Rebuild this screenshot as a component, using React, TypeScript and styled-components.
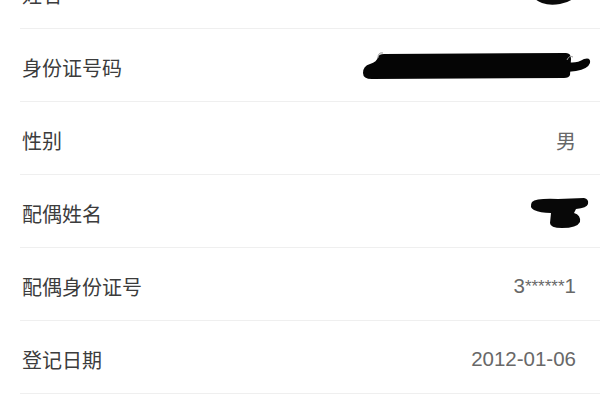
import * as React from 'react';
import styled, { createGlobalStyle } from 'styled-components';

const GlobalStyle = createGlobalStyle`
  html, body {
    margin: 0;
    padding: 0;
    background: #ffffff;
    overflow: hidden;
  }
`;

const Page = styled.div`
  width: 600px;
  height: 400px;
  overflow: hidden;
  background: #ffffff;
  font-family: "Noto Sans CJK SC", "Noto Sans", sans-serif;
`;

const List = styled.div`
  margin-top: -44px;
  padding-left: 20px;
`;

const Row = styled.div`
  display: flex;
  align-items: center;
  justify-content: space-between;
  box-sizing: border-box;
  height: 73px;
  padding: 4px 24px 0 2px;
  border-bottom: 1px solid #efefef;
`;

const Label = styled.span`
  font-size: 20px;
  color: #3c3c3c;
`;

const Value = styled.span<{ $latin?: boolean }>`
  display: flex;
  align-items: center;
  font-family: ${p => (p.$latin ? '"Liberation Sans", Arial, sans-serif' : '"Noto Sans CJK SC", sans-serif')};
  font-size: ${p => (p.$latin ? '20.5px' : '20px')};
  color: #686868;
`;

const Scribble = styled.svg<{ $shift?: number }>`
  display: block;
  margin-right: ${p => -(p.$shift ?? 0)}px;
`;

const NameBlot = () => (
  <Scribble width="48" height="28" viewBox="0 0 48 28" $shift={2}>
    <path d="M4,14 Q14,12 26,13 Q38,11 44,8 Q48,10 46,15 Q42,22 30,24 Q20,26 12,23 Q2,19 4,14 Z" fill="#0a0a0a" />
  </Scribble>
);

const IdBlot = () => (
  <Scribble width="230" height="30" viewBox="0 0 230 30" $shift={16}>
    <path d="M16,5 Q17,2 22,2 L204,1 Q209,1 209,7 L208,23 Q207,26 202,26 L10,27 Q1,27 1,21 Q1,14 8,12 Q15,10 16,5 Z" fill="#050505" />
    <path d="M205,10 Q214,12 222,7 Q229,5 228,11 Q226,17 214,19 L205,20 Z" fill="#050505" />
    <path d="M16,6 Q16,0 21,1" stroke="#9a9a9a" strokeWidth="1" fill="none" />
    <path d="M205,8 Q207,3 211,5" stroke="#9a9a9a" strokeWidth="1" fill="none" />
  </Scribble>
);

const SpouseBlot = () => (
  <Scribble width="62" height="36" viewBox="0 0 62 36" $shift={14}>
    <path d="M4,7 Q8,3 30,4 L56,3 Q61,4 60,9 Q59,13 48,14 L46,18 Q53,20 52,27 Q49,33 34,33 Q22,33 22,28 L23,18 Q12,18 6,15 Q1,12 4,7 Z" fill="#080808" />
  </Scribble>
);

const Stars = styled.span`
  font-size: 17px;
  vertical-align: 1px;
`;

type Item = { label: string; value: React.ReactNode; latin?: boolean };

const items: Item[] = [
  { label: '姓名', value: <NameBlot /> },
  { label: '身份证号码', value: <IdBlot /> },
  { label: '性别', value: '男' },
  { label: '配偶姓名', value: <SpouseBlot /> },
  {
    label: '配偶身份证号',
    latin: true,
    value: (
      <span>
        3<Stars>******</Stars>1
      </span>
    ),
  },
  { label: '登记日期', value: '2012-01-06', latin: true },
];

export default function App() {
  return (
    <Page>
      <GlobalStyle />
      <List>
        {items.map(item => (
          <Row key={item.label}>
            <Label>{item.label}</Label>
            <Value $latin={item.latin}>{item.value}</Value>
          </Row>
        ))}
      </List>
    </Page>
  );
}
